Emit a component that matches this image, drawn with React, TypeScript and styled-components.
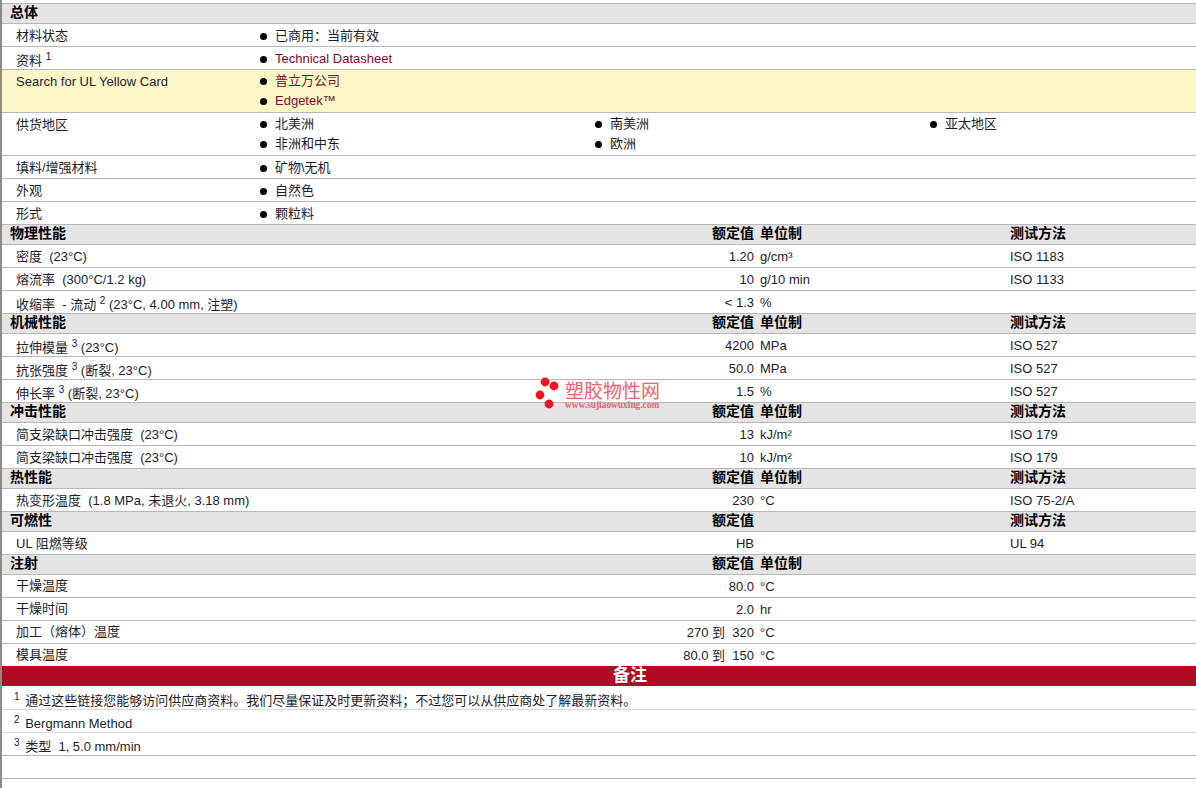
import { Fragment, ReactNode } from 'react'
import styled, { createGlobalStyle } from 'styled-components'

const GlobalStyle = createGlobalStyle`
  html, body {
    margin: 0;
    padding: 0;
    background: #fff;
    overflow: hidden;
    height: 788px;
  }
`

const Page = styled.div`
  position: relative;
  width: 1196px;
  height: 788px;
  overflow: hidden;
  border-left: 2px solid #8c8c84;
  box-sizing: border-box;
  padding-top: 3px;
  font-family: 'Liberation Sans', 'Noto Sans CJK SC', sans-serif;
  font-size: 13px;
  color: #1c1c2c;
`

const Sheet = styled.div`
  width: 1256px;
  border-top: 1px solid #b8b8b8;
`

const Header = styled.div`
  display: grid;
  grid-template-columns: 752px 6px 250px 1fr;
  height: 19px;
  line-height: 17px;
  background: #e4e4e4;
  border-bottom: 1px solid #b8b8b8;
  font-size: 14px;
  font-weight: bold;
  color: #000;
`

const HeaderTitle = styled.div`
  display: flex;
  justify-content: space-between;
  padding-left: 8px;
`

const Row = styled.div<{ $highlight?: boolean; $tall?: boolean }>`
  display: grid;
  grid-template-columns: 242px 1fr;
  padding: ${(p) => (p.$tall ? '1px 0 1px 14px' : '2px 0 0 14px')};
  min-height: 20px;
  line-height: 20px;
  background: ${(p) => (p.$highlight ? '#fcf8c8' : '#fff')};
  border-bottom: 1px solid #b8b8b8;
`

const ValueRow = styled.div`
  display: grid;
  grid-template-columns: minmax(0, 1fr) auto 6px 250px 248px;
  padding: 2px 0 0 14px;
  height: 20px;
  line-height: 20px;
  border-bottom: 1px solid #b8b8b8;
`

const Cell = styled.div<{ $right?: boolean }>`
  text-align: ${(p) => (p.$right ? 'right' : 'left')};
  white-space: pre;
`

const Label = styled.div<{ $drop?: number; $raised?: boolean }>`
  box-sizing: border-box;
  height: 20px;
  white-space: pre;
  padding-top: ${(p) => p.$drop ?? 0}px;
  margin-top: ${(p) => (p.$raised ? '-1px' : '0')};
`

const Sup = styled.sup`
  font-size: 10px;
  line-height: 0;
  vertical-align: 5px;
  color: #1a1060;
`

const NoteMark = styled(Sup)`
  margin-right: 2px;
`

const BulletGrid = styled.ul<{ $cols?: number }>`
  display: grid;
  grid-template-columns: repeat(${(p) => p.$cols ?? 1}, 335px);
  list-style: none;
  margin: 0;
  padding: 0;
`

const BulletItem = styled.li<{ $link?: boolean }>`
  display: flex;
  align-items: center;
  height: 20px;
  color: ${(p) => (p.$link ? '#800a30' : 'inherit')};
`

const Dot = styled.span`
  flex: none;
  width: 7px;
  height: 7px;
  margin: 0 8px 0 2px;
  border-radius: 50%;
  background: #000;
`

const Band = styled.div`
  height: 20px;
  margin: -1px 0 1px;
  line-height: 20px;
  background: #b00a24;
  color: #fff;
  font-family: 'Liberation Serif', 'Noto Sans CJK SC', serif;
  font-weight: bold;
  font-size: 17px;
  text-align: center;
`

const NoteRow = styled.div<{ $dark?: boolean }>`
  padding: 4px 0 0 12px;
  height: 18px;
  line-height: 20px;
  border-bottom: 1px solid ${(p) => (p.$dark ? '#b0b0b0' : '#d8d8d8')};
  white-space: pre;
`

const BlankRow = styled.div`
  height: 22px;
  border-bottom: 1px solid #b0b0b0;
`

const Watermark = styled.div`
  position: absolute;
  left: 533px;
  top: 377px;
  display: flex;
  gap: 6px;
  color: #f0606a;
`

const WatermarkText = styled.div`
  display: flex;
  flex-direction: column;
  margin-top: 4px;
`

const WatermarkName = styled.span`
  font-size: 19px;
  line-height: 21px;
  font-weight: normal;
`

const WatermarkUrl = styled.span`
  margin-top: -1px;
  font-family: 'Liberation Serif', serif;
  font-size: 9.4px;
  line-height: 9px;
  font-weight: bold;
  white-space: nowrap;
`

type Prop = {
  label: ReactNode
  sup?: boolean
  value?: string
  unit?: string
  method?: string
}

const Section = ({
  title,
  unit = true,
  method = true,
  raised,
  rows,
}: {
  title: string
  unit?: boolean
  method?: boolean
  raised?: boolean
  rows: Prop[]
}) => (
  <Fragment>
    <Header>
      <HeaderTitle>
        <span>{title}</span>
        <span>额定值</span>
      </HeaderTitle>
      <span />
      <span>{unit ? '单位制' : ''}</span>
      <span>{method ? '测试方法' : ''}</span>
    </Header>
    {rows.map((r, i) => (
      <ValueRow key={i}>
        <Label $drop={r.sup ? 2 : 0} $raised={raised}>
          {r.label}
        </Label>
        <Cell $right>{r.value}</Cell>
        <span />
        <Cell>{r.unit}</Cell>
        <Cell>{r.method}</Cell>
      </ValueRow>
    ))}
  </Fragment>
)

const App = () => {
  return (
    <Page>
      <GlobalStyle />
      <Sheet>
        <Header>
          <HeaderTitle>
            <span>总体</span>
          </HeaderTitle>
        </Header>
        <Row>
          <Label>材料状态</Label>
          <BulletGrid>
            <BulletItem>
              <Dot />
              已商用：当前有效
            </BulletItem>
          </BulletGrid>
        </Row>
        <Row>
          <Label $drop={2}>
            资料 <Sup>1</Sup>
          </Label>
          <BulletGrid>
            <BulletItem $link>
              <Dot />
              Technical Datasheet
            </BulletItem>
          </BulletGrid>
        </Row>
        <Row $highlight $tall>
          <Label $drop={1}>Search for UL Yellow Card</Label>
          <BulletGrid>
            <BulletItem $link>
              <Dot />
              普立万公司
            </BulletItem>
            <BulletItem $link>
              <Dot />
              Edgetek™
            </BulletItem>
          </BulletGrid>
        </Row>
        <Row $tall>
          <Label $drop={1}>供货地区</Label>
          <BulletGrid $cols={3}>
            <BulletItem>
              <Dot />
              北美洲
            </BulletItem>
            <BulletItem>
              <Dot />
              南美洲
            </BulletItem>
            <BulletItem>
              <Dot />
              亚太地区
            </BulletItem>
            <BulletItem>
              <Dot />
              非洲和中东
            </BulletItem>
            <BulletItem>
              <Dot />
              欧洲
            </BulletItem>
          </BulletGrid>
        </Row>
        <Row>
          <Label>填料/增强材料</Label>
          <BulletGrid>
            <BulletItem>
              <Dot />
              矿物\无机
            </BulletItem>
          </BulletGrid>
        </Row>
        <Row>
          <Label>外观</Label>
          <BulletGrid>
            <BulletItem>
              <Dot />
              自然色
            </BulletItem>
          </BulletGrid>
        </Row>
        <Row>
          <Label>形式</Label>
          <BulletGrid>
            <BulletItem>
              <Dot />
              颗粒料
            </BulletItem>
          </BulletGrid>
        </Row>
        <Section
          title="物理性能"
          rows={[
            { label: '密度  (23°C)', value: '1.20', unit: 'g/cm³', method: 'ISO 1183' },
            { label: '熔流率  (300°C/1.2 kg)', value: '10', unit: 'g/10 min', method: 'ISO 1133' },
            {
              label: (
                <>
                  收缩率  - 流动 <Sup>2</Sup> (23°C, 4.00 mm, 注塑)
                </>
              ),
              sup: true,
              value: '< 1.3',
              unit: '%',
            },
          ]}
        />
        <Section
          title="机械性能"
          rows={[
            {
              label: (
                <>
                  拉伸模量 <Sup>3</Sup> (23°C)
                </>
              ),
              sup: true,
              value: '4200',
              unit: 'MPa',
              method: 'ISO 527',
            },
            {
              label: (
                <>
                  抗张强度 <Sup>3</Sup> (断裂, 23°C)
                </>
              ),
              sup: true,
              value: '50.0',
              unit: 'MPa',
              method: 'ISO 527',
            },
            {
              label: (
                <>
                  伸长率 <Sup>3</Sup> (断裂, 23°C)
                </>
              ),
              sup: true,
              value: '1.5',
              unit: '%',
              method: 'ISO 527',
            },
          ]}
        />
        <Section
          title="冲击性能"
          rows={[
            { label: '简支梁缺口冲击强度  (23°C)', value: '13', unit: 'kJ/m²', method: 'ISO 179' },
            { label: '简支梁缺口冲击强度  (23°C)', value: '10', unit: 'kJ/m²', method: 'ISO 179' },
          ]}
        />
        <Section
          title="热性能"
          rows={[
            {
              label: '热变形温度  (1.8 MPa, 未退火, 3.18 mm)',
              value: '230',
              unit: '°C',
              method: 'ISO 75-2/A',
            },
          ]}
        />
        <Section
          title="可燃性"
          unit={false}
          rows={[{ label: 'UL 阻燃等级', value: 'HB', method: 'UL 94' }]}
        />
        <Section
          title="注射"
          method={false}
          raised
          rows={[
            { label: '干燥温度', value: '80.0', unit: '°C' },
            { label: '干燥时间', value: '2.0', unit: 'hr' },
            { label: '加工（熔体）温度', value: '270 到  320', unit: '°C' },
            { label: '模具温度', value: '80.0 到  150', unit: '°C' },
          ]}
        />
        <Band>备注</Band>
        <NoteRow>
          <NoteMark>1</NoteMark> 通过这些链接您能够访问供应商资料。我们尽量保证及时更新资料；不过您可以从供应商处了解最新资料。
        </NoteRow>
        <NoteRow>
          <NoteMark>2</NoteMark> Bergmann Method
        </NoteRow>
        <NoteRow $dark>
          <NoteMark>3</NoteMark> 类型  1, 5.0 mm/min
        </NoteRow>
        <BlankRow />
      </Sheet>
      <Watermark>
        <svg width="24" height="33" viewBox="0 0 24 33">
          <circle cx="10" cy="5" r="4.4" fill="#f4101c" />
          <circle cx="19" cy="9" r="4.4" fill="#f4101c" />
          <circle cx="5" cy="18" r="4.4" fill="#f4101c" />
          <circle cx="14" cy="27" r="4.4" fill="#f4101c" />
        </svg>
        <WatermarkText>
          <WatermarkName>塑胶物性网</WatermarkName>
          <WatermarkUrl>www.sujiaowuxing.com</WatermarkUrl>
        </WatermarkText>
      </Watermark>
    </Page>
  )
}

export default App
